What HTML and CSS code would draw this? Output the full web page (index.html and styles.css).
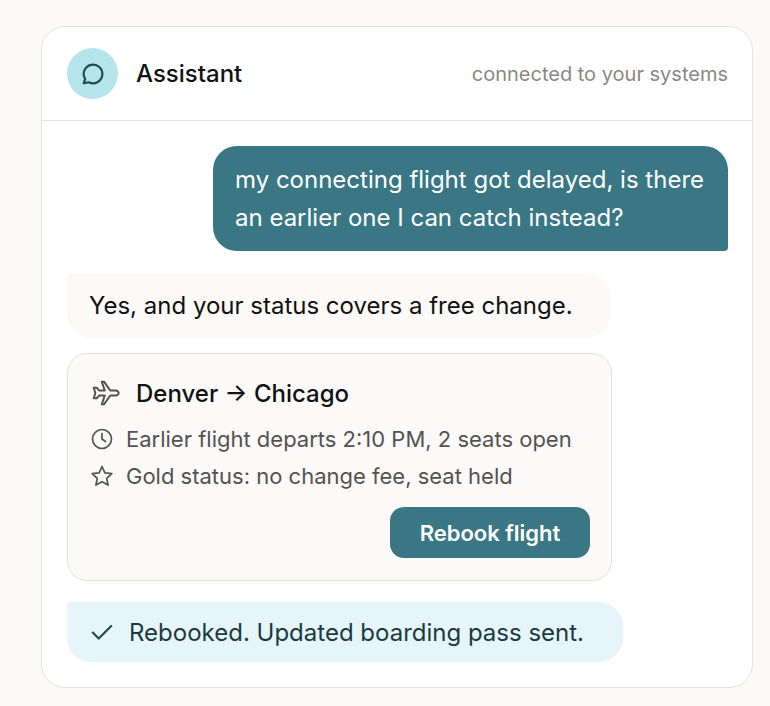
FILE: index.html

```html
<!DOCTYPE html>
<html lang="en">
<head>
<meta charset="UTF-8">
<meta name="viewport" content="width=device-width, initial-scale=1.0">
<title>Assistant</title>
<link rel="stylesheet" href="styles.css">
</head>
<body>
<div class="chat">
    <div class="chat-header">
        <div class="avatar">
            <svg width="26" height="26" viewBox="0 0 24 24" fill="none" stroke="#1f4a52" stroke-width="2" stroke-linecap="round" stroke-linejoin="round"><path d="M3.5 20.5l1.3-3.9a8.6 8.6 0 1 1 3.3 3z"/></svg>
        </div>
        <span class="chat-title">Assistant</span>
        <span class="chat-sub">connected to your systems</span>
    </div>
    <div class="chat-body">
        <div class="bubble-user">my connecting flight got delayed, is there an earlier one I can catch instead?</div>
        <div class="bubble-bot">Yes, and your status covers a free change.</div>
        <div class="flight-card">
            <div class="flight-title">
                <svg width="32" height="32" viewBox="0 0 24 24" fill="none" stroke="#555350" stroke-width="1.5" stroke-linejoin="round"><path d="M21.5 12c0-1-1-1.9-2.2-1.9h-4.100L10.500 3.500H8.800l2.300 6.600H6.800L5 8H2.800l1.200 4-1.200 4H5l1.800-2.100h4.300l-2.300 6.600h1.700l4.700-6.600h4.100c1.200 0 2.200-.9 2.200-1.900z"/></svg>
                <span>Denver → Chicago</span>
            </div>
            <div class="flight-line">
                <svg width="24" height="24" viewBox="0 0 24 24" fill="none" stroke="#555350" stroke-width="1.700" stroke-linecap="round" stroke-linejoin="round"><circle cx="12" cy="12" r="9.500"/><path d="M12 6.500V12l3.500 2.500"/></svg>
                <span>Earlier flight departs 2:10 PM, 2 seats open</span>
            </div>
            <div class="flight-line">
                <svg width="24" height="24" viewBox="0 0 24 24" fill="none" stroke="#555350" stroke-width="1.700" stroke-linejoin="round"><path d="M12 2.500l2.900 6.300 6.900.8-5.100 4.700 1.400 6.800-6.100-3.400-6.100 3.400 1.400-6.800-5.100-4.700 6.900-.8z"/></svg>
                <span>Gold status: no change fee, seat held</span>
            </div>
            <div class="flight-actions">
                <button type="button" class="rebook">Rebook flight</button>
            </div>
        </div>
        <div class="status">
            <svg width="26" height="26" viewBox="0 0 24 24" fill="none" stroke="#1f4a52" stroke-width="2" stroke-linecap="round" stroke-linejoin="round"><path d="M3.500 12.500l5.500 5.500L20.500 6.500"/></svg>
            <span>Rebooked. Updated boarding pass sent.</span>
        </div>
    </div>
</div>
</body>
</html>
```

FILE: styles.css

```css
body {
    font-family: Inter, "Liberation Sans", sans-serif;
    background-color: #fbfaf8;
    margin: 0;
    padding: 26px 17px 18px 41px;
    color: #111;
}

.chat {
    background-color: #fff;
    border: 1px solid #e6e4e0;
    border-radius: 24px;
    width: 710px;
    height: 660px;
}

.chat-header {
    display: flex;
    align-items: center;
    height: 93px;
    padding: 0 24px 0 25px;
    border-bottom: 1px solid #e6e4e0;
}

.avatar {
    width: 51px;
    height: 51px;
    border-radius: 50%;
    background-color: #b5e4eb;
    display: flex;
    justify-content: center;
    align-items: center;
    margin-right: 18px;
}

.chat-title {
    font-size: 24px;
    font-weight: 500;
    flex: 1;
}

.chat-sub {
    font-size: 20px;
    color: #8a8883;
}

.chat-body {
    display: flex;
    flex-direction: column;
    align-items: flex-start;
    padding: 25px 24px 0 25px;
}

.bubble-user {
    align-self: flex-end;
    box-sizing: border-box;
    width: 515px;
    height: 105px;
    padding: 15px 22px;
    background-color: #387783;
    color: #fff;
    font-size: 24px;
    line-height: 38px;
    border-radius: 24px 24px 4px 24px;
}

.bubble-bot {
    box-sizing: border-box;
    width: 544px;
    height: 65px;
    margin-top: 22px;
    padding: 14px 22px;
    background-color: #fbfaf8;
    font-size: 24px;
    line-height: 38px;
    border-radius: 4px 24px 24px 24px;
}

.flight-card {
    box-sizing: border-box;
    width: 545px;
    height: 228px;
    margin-top: 15px;
    padding: 20px 21px 22px 22px;
    background-color: #fbfaf8;
    border: 1px solid #e3e1dd;
    border-radius: 20px;
}

.flight-title {
    display: flex;
    align-items: center;
    gap: 14px;
    font-size: 24px;
    font-weight: 500;
    height: 38px;
    margin-bottom: 8px;
}

.flight-line {
    display: flex;
    align-items: center;
    gap: 12px;
    font-size: 22px;
    color: #555350;
    height: 37px;
}

.flight-actions {
    display: flex;
    justify-content: flex-end;
    margin-top: 13px;
}

.rebook {
    width: 200px;
    height: 51px;
    background-color: #387783;
    color: #fff;
    border: none;
    border-radius: 14px;
    font-family: inherit;
    font-size: 22px;
    font-weight: 600;
    cursor: pointer;
}

.status {
    box-sizing: border-box;
    display: flex;
    align-items: center;
    gap: 14px;
    width: 556px;
    height: 60px;
    margin-top: 21px;
    padding: 0 22px;
    background-color: #e5f5f9;
    color: #1a3a40;
    font-size: 24px;
    border-radius: 4px 24px 24px 24px;
}
```
